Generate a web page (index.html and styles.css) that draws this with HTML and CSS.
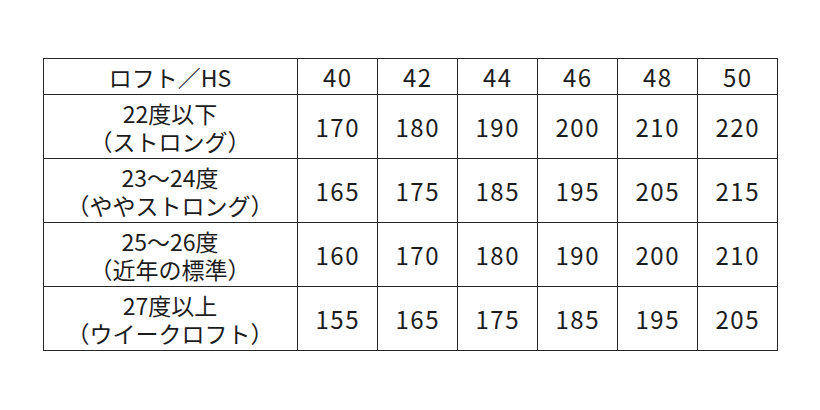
FILE: index.html
```html
<!DOCTYPE html>
<html lang="ja">
<head>
<meta charset="utf-8">
<link rel="stylesheet" href="styles.css">
</head>
<body>
<table class="loft-table">
  <colgroup>
    <col class="col-label">
    <col class="col-num"><col class="col-num"><col class="col-num">
    <col class="col-num"><col class="col-num"><col class="col-num">
  </colgroup>
  <thead>
    <tr class="head-row">
      <th class="label">ロフト／HS</th>
      <th>40</th><th>42</th><th>44</th><th>46</th><th>48</th><th>50</th>
    </tr>
  </thead>
  <tbody>
    <tr class="body-row">
      <td class="label"><span class="line">22度以下</span><span class="line">（ストロング）</span></td>
      <td>170</td><td>180</td><td>190</td><td>200</td><td>210</td><td>220</td>
    </tr>
    <tr class="body-row">
      <td class="label"><span class="line">23〜24度</span><span class="line">（ややストロング）</span></td>
      <td>165</td><td>175</td><td>185</td><td>195</td><td>205</td><td>215</td>
    </tr>
    <tr class="body-row">
      <td class="label"><span class="line">25〜26度</span><span class="line">（近年の標準）</span></td>
      <td>160</td><td>170</td><td>180</td><td>190</td><td>200</td><td>210</td>
    </tr>
    <tr class="body-row">
      <td class="label"><span class="line">27度以上</span><span class="line">（ウイークロフト）</span></td>
      <td>155</td><td>165</td><td>175</td><td>185</td><td>195</td><td>205</td>
    </tr>
  </tbody>
</table>
</body>
</html>
```
FILE: styles.css
```css
html, body {
  margin: 0;
  padding: 0;
  background: #ffffff;
}
body {
  padding-top: 58px;
  font-family: "Noto Sans CJK JP", "Noto Sans", sans-serif;
  color: #1c1c1c;
}
.loft-table {
  margin: 0 auto;
  border-collapse: collapse;
  table-layout: fixed;
  width: 735px;
}
.col-label { width: 254px; }
.col-num { width: 80px; }
.loft-table th,
.loft-table td {
  border: 1px solid #262626;
  padding: 0;
  text-align: center;
  vertical-align: middle;
  font-weight: 400;
  font-size: 24px;
  line-height: 30px;
  letter-spacing: 1.5px;
  text-indent: 1.5px;
}
.loft-table .label {
  font-size: 23px;
  letter-spacing: 0;
  text-indent: 0;
}
.line {
  display: block;
  height: 28px;
  line-height: 28px;
}
.head-row { height: 36px; }
.body-row { height: 64px; }
```
